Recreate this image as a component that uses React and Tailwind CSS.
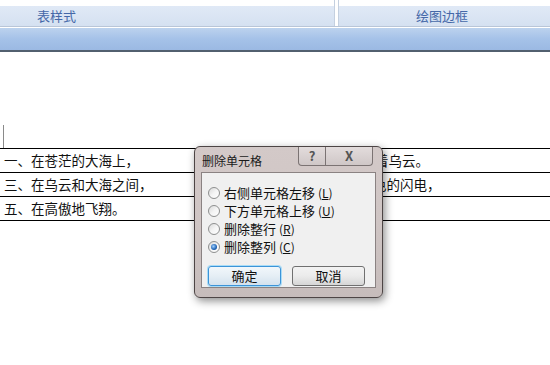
const font = "font-['SimSun','Noto_Sans_CJK_SC','Noto_Sans',sans-serif]";

const rows = [
  { left: "一、在苍茫的大海上，", right: "二、狂风卷集着乌云。", pad: "pl-[14px]" },
  { left: "三、在乌云和大海之间，", right: "四、海燕像黑色的闪电，", pad: "pl-[12px]" },
  { left: "五、在高傲地飞翔。", right: "", pad: "pl-[12px]" },
];

const options = [
  { label: "右侧单元格左移", key: "L" },
  { label: "下方单元格上移", key: "U" },
  { label: "删除整行", key: "R" },
  { label: "删除整列", key: "C", checked: true },
];

function Radio({ checked }) {
  return (
    <span className="flex h-[12px] w-[12px] items-center justify-center rounded-full border border-[#8e8f8f] bg-gradient-to-br from-[#d9d9d9] via-[#f4f4f4] to-white">
      {checked && (
        <span className="h-[6px] w-[6px] rounded-full bg-[radial-gradient(circle_at_40%_40%,#9fd0ff,#1f63b4_60%,#0d3a78)]" />
      )}
    </span>
  );
}

function Ribbon() {
  return (
    <header className="flex flex-col">
      <div className="flex h-[26px]">
        <div className="flex w-[335px] flex-col border-r border-[#c4d0e0]">
          <div className="h-[6px] bg-white" />
          <div className="flex flex-1 items-center bg-gradient-to-b from-[#e0e9f6] to-[#d5e1f1] pl-[37px] text-[13px] text-[#4568a8]">
            表样式
          </div>
        </div>
        <div className="w-[3px] bg-white" />
        <div className="flex flex-1 flex-col border-l border-[#c4d0e0]">
          <div className="h-[6px] bg-white" />
          <div className="flex flex-1 items-center bg-gradient-to-b from-[#e0e9f6] to-[#d5e1f1] pl-[77px] text-[13px] text-[#4568a8]">
            绘图边框
          </div>
        </div>
      </div>
      <div className="h-[1px] bg-[#b9c6d8]" />
      <div className="h-[1px] bg-white" />
      <div className="h-[24px] border-b-2 border-[#52606f] bg-gradient-to-b from-[#bcd2ee] via-[#a5c2e8] to-[#9bb9e3]" />
    </header>
  );
}

function Dialog() {
  return (
    <div className="absolute left-[194px] top-[146px] flex h-[152px] w-[189px] flex-col rounded-[6px] border border-[#4d4545] bg-gradient-to-b from-[#d3c9c8] via-[#cfc5c4] to-[#c6bcbb] shadow-[2px_3px_8px_rgba(0,0,0,0.45)]">
      <div className="flex h-[25px] items-start">
        <span className="pl-[7px] pt-[7px] text-[12px] leading-[14px] text-[#1a1a1a]">删除单元格</span>
        <div className="ml-auto mr-[9px] flex h-[19px]">
          <span className="flex w-[28px] items-center justify-center rounded-bl-[4px] border border-t-0 border-[#7b7373] bg-gradient-to-b from-[#e3dcdc] to-[#cfc7c7] text-[13px] font-bold text-[#555]">
            ?
          </span>
          <span className="flex w-[47px] items-center justify-center rounded-br-[4px] border border-l-0 border-t-0 border-[#7b7373] bg-gradient-to-b from-[#e3dcdc] to-[#cfc7c7] text-[13px] font-bold text-[#555]">
            X
          </span>
        </div>
      </div>
      <div className="mx-[6px] mb-[9px] flex flex-1 flex-col border border-[#8a8282] bg-[#f0f0f0] px-[6px] pt-[13px]">
        <div className="flex flex-col gap-[5px]">
          {options.map((o) => (
            <div key={o.key} className="flex h-[13px] items-center gap-[4px] text-[13px] leading-[13px] text-[#111]">
              <Radio checked={o.checked} />
              <span>
                {o.label} <span className="text-[12px]">(<span className="underline">{o.key}</span>)</span>
              </span>
            </div>
          ))}
        </div>
        <div className="mt-[13px] flex gap-[11px]">
          <button className="flex h-[20px] w-[73px] items-center justify-center rounded-[3px] border border-[#3c94d8] bg-gradient-to-b from-[#f2f7fb] via-[#e5eef5] to-[#d3e2ee] text-[13px] text-[#111] shadow-[0_0_0_1px_#a9dcf7]">
            确定
          </button>
          <button className="flex h-[20px] w-[73px] items-center justify-center rounded-[3px] border border-[#707070] bg-gradient-to-b from-[#f3f3f3] via-[#ebebeb] to-[#d6d6d6] text-[13px] text-[#111]">
            取消
          </button>
        </div>
      </div>
    </div>
  );
}

export default function App() {
  return (
    <div className={`relative h-[365px] w-[550px] overflow-hidden bg-white ${font}`}>
      <Ribbon />
      <main className="pt-[73px]">
        <div className="ml-[3px] h-[23px] w-[1px] bg-[#8a8a8a]" />
        <div className="border-t border-black">
          {rows.map((r, i) => (
            <div key={i} className="flex h-[24px] items-center border-b border-black text-[13.5px] text-[#111]">
              <span className="w-[280px] shrink-0 pl-[4px]">{r.left}</span>
              <span className={r.pad}>{r.right}</span>
            </div>
          ))}
        </div>
      </main>
      <Dialog />
    </div>
  );
}
